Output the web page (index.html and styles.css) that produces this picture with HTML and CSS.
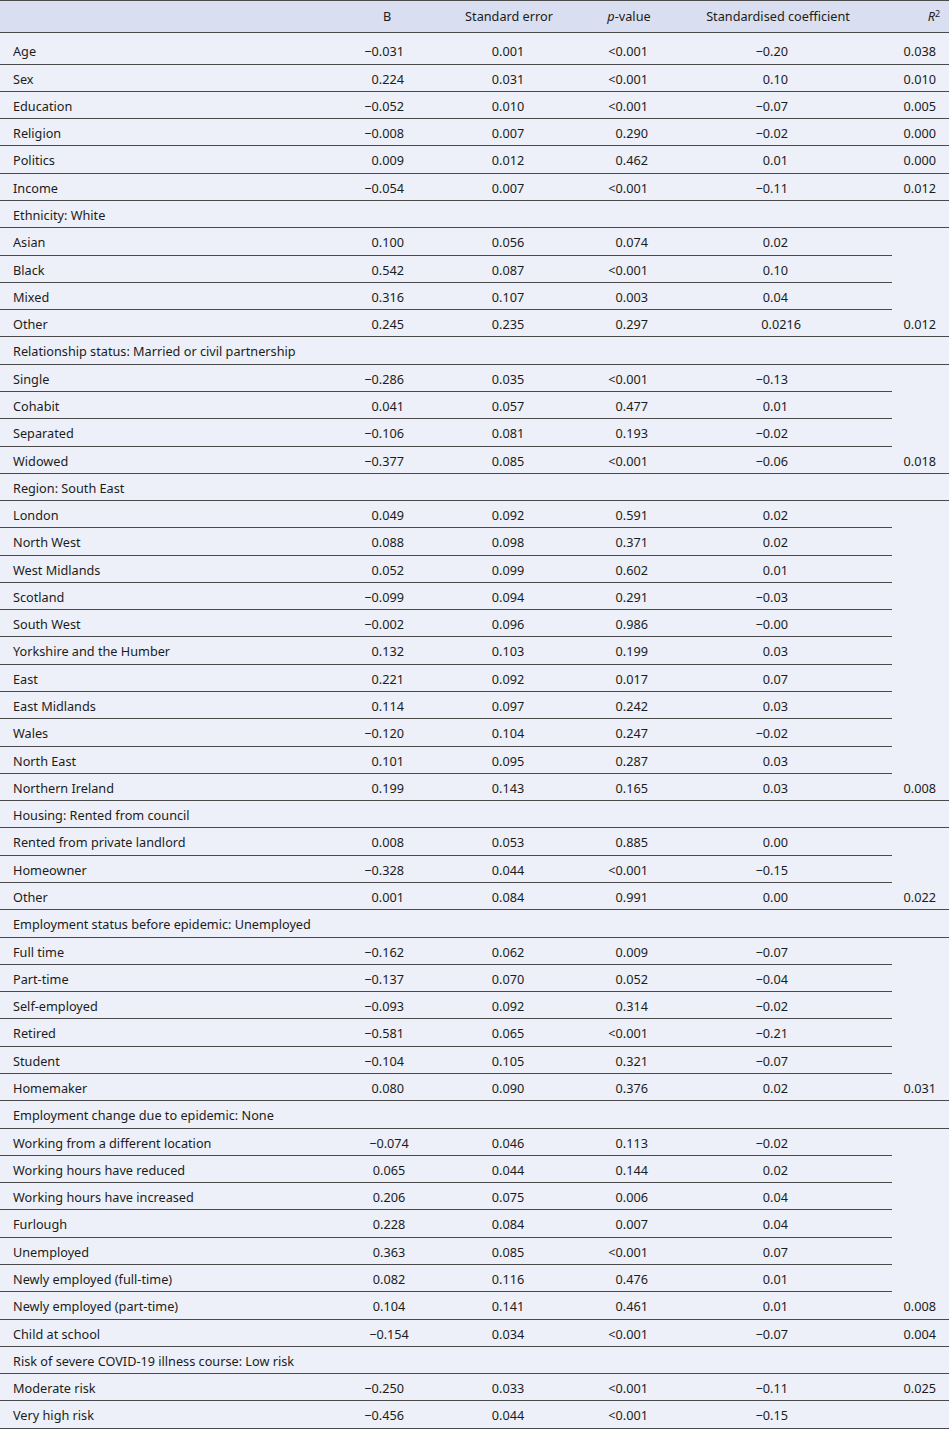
FILE: index.html
```html
<!DOCTYPE html>
<html lang="en">
<head>
<meta charset="utf-8">
<title>Regression table</title>
<link rel="stylesheet" href="styles.css">
</head>
<body>
<table class="tbl">
  <colgroup>
    <col class="c-label">
    <col class="c-b">
    <col class="c-se">
    <col class="c-p">
    <col class="c-sc">
    <col class="c-r2">
  </colgroup>
  <thead>
    <tr>
      <th class="lab"></th>
      <th class="hb">B</th>
      <th class="hse">Standard error</th>
      <th class="hp"><i>p</i>-value</th>
      <th class="hsc">Standardised coefficient</th>
      <th class="hr2"><i>R</i><sup>2</sup></th>
    </tr>
  </thead>
  <tbody>
    <tr class="first"><td class="lab">Age</td><td class="b">−0.031</td><td class="se">0.001</td><td class="p">&lt;0.001</td><td class="sc">−0.20</td><td class="r2">0.038</td></tr>
    <tr><td class="lab">Sex</td><td class="b">0.224</td><td class="se">0.031</td><td class="p">&lt;0.001</td><td class="sc">0.10</td><td class="r2">0.010</td></tr>
    <tr><td class="lab">Education</td><td class="b">−0.052</td><td class="se">0.010</td><td class="p">&lt;0.001</td><td class="sc">−0.07</td><td class="r2">0.005</td></tr>
    <tr><td class="lab">Religion</td><td class="b">−0.008</td><td class="se">0.007</td><td class="p">0.290</td><td class="sc">−0.02</td><td class="r2">0.000</td></tr>
    <tr><td class="lab">Politics</td><td class="b">0.009</td><td class="se">0.012</td><td class="p">0.462</td><td class="sc">0.01</td><td class="r2">0.000</td></tr>
    <tr><td class="lab">Income</td><td class="b">−0.054</td><td class="se">0.007</td><td class="p">&lt;0.001</td><td class="sc">−0.11</td><td class="r2">0.012</td></tr>

    <tr><td class="lab" colspan="6">Ethnicity: White</td></tr>
    <tr><td class="lab">Asian</td><td class="b">0.100</td><td class="se">0.056</td><td class="p">0.074</td><td class="sc">0.02</td><td class="r2 span" rowspan="4">0.012</td></tr>
    <tr><td class="lab">Black</td><td class="b">0.542</td><td class="se">0.087</td><td class="p">&lt;0.001</td><td class="sc">0.10</td></tr>
    <tr><td class="lab">Mixed</td><td class="b">0.316</td><td class="se">0.107</td><td class="p">0.003</td><td class="sc">0.04</td></tr>
    <tr><td class="lab">Other</td><td class="b">0.245</td><td class="se">0.235</td><td class="p">0.297</td><td class="sc sc-long">0.0216</td></tr>

    <tr><td class="lab" colspan="6">Relationship status: Married or civil partnership</td></tr>
    <tr><td class="lab">Single</td><td class="b">−0.286</td><td class="se">0.035</td><td class="p">&lt;0.001</td><td class="sc">−0.13</td><td class="r2 span" rowspan="4">0.018</td></tr>
    <tr><td class="lab">Cohabit</td><td class="b">0.041</td><td class="se">0.057</td><td class="p">0.477</td><td class="sc">0.01</td></tr>
    <tr><td class="lab">Separated</td><td class="b">−0.106</td><td class="se">0.081</td><td class="p">0.193</td><td class="sc">−0.02</td></tr>
    <tr><td class="lab">Widowed</td><td class="b">−0.377</td><td class="se">0.085</td><td class="p">&lt;0.001</td><td class="sc">−0.06</td></tr>

    <tr><td class="lab" colspan="6">Region: South East</td></tr>
    <tr><td class="lab">London</td><td class="b">0.049</td><td class="se">0.092</td><td class="p">0.591</td><td class="sc">0.02</td><td class="r2 span" rowspan="11">0.008</td></tr>
    <tr><td class="lab">North West</td><td class="b">0.088</td><td class="se">0.098</td><td class="p">0.371</td><td class="sc">0.02</td></tr>
    <tr><td class="lab">West Midlands</td><td class="b">0.052</td><td class="se">0.099</td><td class="p">0.602</td><td class="sc">0.01</td></tr>
    <tr><td class="lab">Scotland</td><td class="b">−0.099</td><td class="se">0.094</td><td class="p">0.291</td><td class="sc">−0.03</td></tr>
    <tr><td class="lab">South West</td><td class="b">−0.002</td><td class="se">0.096</td><td class="p">0.986</td><td class="sc">−0.00</td></tr>
    <tr><td class="lab">Yorkshire and the Humber</td><td class="b">0.132</td><td class="se">0.103</td><td class="p">0.199</td><td class="sc">0.03</td></tr>
    <tr><td class="lab">East</td><td class="b">0.221</td><td class="se">0.092</td><td class="p">0.017</td><td class="sc">0.07</td></tr>
    <tr><td class="lab">East Midlands</td><td class="b">0.114</td><td class="se">0.097</td><td class="p">0.242</td><td class="sc">0.03</td></tr>
    <tr><td class="lab">Wales</td><td class="b">−0.120</td><td class="se">0.104</td><td class="p">0.247</td><td class="sc">−0.02</td></tr>
    <tr><td class="lab">North East</td><td class="b">0.101</td><td class="se">0.095</td><td class="p">0.287</td><td class="sc">0.03</td></tr>
    <tr><td class="lab">Northern Ireland</td><td class="b">0.199</td><td class="se">0.143</td><td class="p">0.165</td><td class="sc">0.03</td></tr>

    <tr><td class="lab" colspan="6">Housing: Rented from council</td></tr>
    <tr><td class="lab">Rented from private landlord</td><td class="b">0.008</td><td class="se">0.053</td><td class="p">0.885</td><td class="sc">0.00</td><td class="r2 span" rowspan="3">0.022</td></tr>
    <tr><td class="lab">Homeowner</td><td class="b">−0.328</td><td class="se">0.044</td><td class="p">&lt;0.001</td><td class="sc">−0.15</td></tr>
    <tr><td class="lab">Other</td><td class="b">0.001</td><td class="se">0.084</td><td class="p">0.991</td><td class="sc">0.00</td></tr>

    <tr><td class="lab" colspan="6">Employment status before epidemic: Unemployed</td></tr>
    <tr><td class="lab">Full time</td><td class="b">−0.162</td><td class="se">0.062</td><td class="p">0.009</td><td class="sc">−0.07</td><td class="r2 span" rowspan="6">0.031</td></tr>
    <tr><td class="lab">Part-time</td><td class="b">−0.137</td><td class="se">0.070</td><td class="p">0.052</td><td class="sc">−0.04</td></tr>
    <tr><td class="lab">Self-employed</td><td class="b">−0.093</td><td class="se">0.092</td><td class="p">0.314</td><td class="sc">−0.02</td></tr>
    <tr><td class="lab">Retired</td><td class="b">−0.581</td><td class="se">0.065</td><td class="p">&lt;0.001</td><td class="sc">−0.21</td></tr>
    <tr><td class="lab">Student</td><td class="b">−0.104</td><td class="se">0.105</td><td class="p">0.321</td><td class="sc">−0.07</td></tr>
    <tr><td class="lab">Homemaker</td><td class="b">0.080</td><td class="se">0.090</td><td class="p">0.376</td><td class="sc">0.02</td></tr>

    <tr><td class="lab" colspan="6">Employment change due to epidemic: None</td></tr>
    <tr><td class="lab">Working from a different location</td><td class="b b-ctr">−0.074</td><td class="se">0.046</td><td class="p">0.113</td><td class="sc">−0.02</td><td class="r2 span" rowspan="7">0.008</td></tr>
    <tr><td class="lab">Working hours have reduced</td><td class="b b-ctr">0.065</td><td class="se">0.044</td><td class="p">0.144</td><td class="sc">0.02</td></tr>
    <tr><td class="lab">Working hours have increased</td><td class="b b-ctr">0.206</td><td class="se">0.075</td><td class="p">0.006</td><td class="sc">0.04</td></tr>
    <tr><td class="lab">Furlough</td><td class="b b-ctr">0.228</td><td class="se">0.084</td><td class="p">0.007</td><td class="sc">0.04</td></tr>
    <tr><td class="lab">Unemployed</td><td class="b b-ctr">0.363</td><td class="se">0.085</td><td class="p">&lt;0.001</td><td class="sc">0.07</td></tr>
    <tr><td class="lab">Newly employed (full-time)</td><td class="b b-ctr">0.082</td><td class="se">0.116</td><td class="p">0.476</td><td class="sc">0.01</td></tr>
    <tr><td class="lab">Newly employed (part-time)</td><td class="b b-ctr">0.104</td><td class="se">0.141</td><td class="p">0.461</td><td class="sc">0.01</td></tr>

    <tr><td class="lab">Child at school</td><td class="b b-ctr">−0.154</td><td class="se">0.034</td><td class="p">&lt;0.001</td><td class="sc">−0.07</td><td class="r2">0.004</td></tr>

    <tr><td class="lab" colspan="6">Risk of severe COVID-19 illness course: Low risk</td></tr>
    <tr><td class="lab">Moderate risk</td><td class="b">−0.250</td><td class="se">0.033</td><td class="p">&lt;0.001</td><td class="sc">−0.11</td><td class="r2">0.025</td></tr>
    <tr><td class="lab">Very high risk</td><td class="b">−0.456</td><td class="se">0.044</td><td class="p">&lt;0.001</td><td class="sc">−0.15</td><td class="r2"></td></tr>
  </tbody>
</table>
</body>
</html>
```

FILE: styles.css
```css
html, body {
  margin: 0;
  padding: 0;
  background: #edf0f8;
}

.tbl {
  width: 949px;
  border-collapse: collapse;
  table-layout: fixed;
  font-family: "Noto Sans", "Open Sans", sans-serif;
  font-size: 12.7px;
  color: #1c1c1c;
  background: #edf0f8;
}

.c-label { width: 350px; }
.c-b { width: 74px; }
.c-se { width: 170px; }
.c-p { width: 70px; }
.c-sc { width: 228px; }
.c-r2 { width: 57px; }

.tbl th,
.tbl td {
  padding: 6px 0 4px;
  line-height: 16.28px;
  border-bottom: 1px solid #4a4a4a;
  white-space: nowrap;
  font-weight: normal;
}

.tbl thead th {
  background: #d9dff0;
  border-top: 1px solid #4a4a4a;
  padding-top: 7px;
  padding-bottom: 8px;
  text-align: center;
}

.tbl thead .hr2 {
  text-align: right;
  padding-right: 9px;
}

.tbl sup {
  font-size: 0.7em;
  line-height: 0;
  vertical-align: 0.5em;
}

.tbl .first td {
  padding-top: 10px;
}

.lab {
  text-align: left;
  padding-left: 13px !important;
}

.b {
  text-align: right;
  padding-right: 20px !important;
}

.b.b-ctr {
  text-align: center;
  padding-right: 0 !important;
  padding-left: 4px;
}

.se {
  text-align: center;
  padding-right: 2px !important;
}

.p {
  text-align: right;
  padding-right: 16px !important;
}

.sc {
  text-align: right;
  padding-right: 104px !important;
}

.sc.sc-long {
  padding-right: 91px !important;
}

.r2 {
  text-align: right;
  padding-right: 13px !important;
}

.r2.span {
  vertical-align: bottom;
}
```
